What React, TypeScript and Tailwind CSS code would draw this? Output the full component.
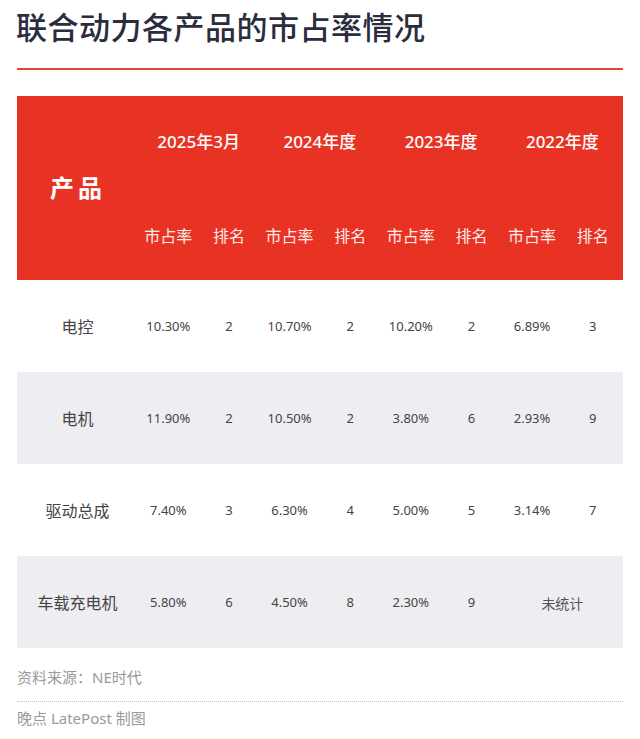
const years = ['2025年3月', '2024年度', '2023年度', '2022年度'];

const rows = [
  { name: '电控', cells: ['10.30%', '2', '10.70%', '2', '10.20%', '2', '6.89%', '3'] },
  { name: '电机', cells: ['11.90%', '2', '10.50%', '2', '3.80%', '6', '2.93%', '9'] },
  { name: '驱动总成', cells: ['7.40%', '3', '6.30%', '4', '5.00%', '5', '3.14%', '7'] },
  { name: '车载充电机', cells: ['5.80%', '6', '4.50%', '8', '2.30%', '9'] },
];

const font = { fontFamily: '"Noto Sans", "Noto Sans CJK SC", sans-serif' };

export default function App() {
  return (
    <div className="w-[640px] h-[739px] bg-white overflow-hidden" style={font}>
      <h1 className="pl-4 pt-[7px] text-[31px] leading-[40px] font-medium text-[#2a2d3e] tracking-[0.5px]">
        联合动力各产品的市占率情况
      </h1>

      <div className="mx-[17px] mt-[21px] h-[2px] bg-[#e4433a]" />

      <div className="mx-[17px] mt-[26px]">
        {/* Header */}
        <div className="grid grid-cols-[121px_repeat(8,1fr)] grid-rows-[88px_96px] h-[184px] bg-[#e83324] text-white">
          <div className="row-span-2 flex items-center justify-center text-[24px] font-bold tracking-[4px] pl-[1px]">
            产品
          </div>
          {years.map((y) => (
            <div key={y} className="col-span-2 flex items-center justify-center pt-[4px] text-[17px] font-medium">
              {y}
            </div>
          ))}
          {years.map((y) => (
            <div key={y + 's'} className="col-span-2 grid grid-cols-2 content-start pt-[40px] text-[16px] leading-[24px] text-white/90">
              <div className="text-center">市占率</div>
              <div className="text-center">排名</div>
            </div>
          ))}
        </div>

        {/* Body */}
        {rows.map((r, i) => (
          <div
            key={r.name}
            className={`grid grid-cols-[121px_repeat(8,1fr)] h-[92px] items-center pt-[2px] ${i % 2 === 1 ? 'bg-[#eeeef2]' : 'bg-white'}`}
          >
            <div className="text-center text-[16px] text-[#444]">{r.name}</div>
            {r.cells.map((c, j) => (
              <div key={j} className="text-center text-[13px] text-[#444]">
                {c}
              </div>
            ))}
            {r.cells.length < 8 && (
              <div className="col-span-2 text-center text-[14px] text-[#555]">未统计</div>
            )}
          </div>
        ))}
      </div>

      <div className="mx-[17px] mt-[19px] text-[15px] leading-[20px] text-[#9a9a9a]">资料来源：NE时代</div>
      <div className="mx-[17px] mt-[14px] border-t border-dotted border-[#bbbbbb]" />
      <div className="mx-[17px] mt-[6px] text-[15px] leading-[20px] text-[#9a9a9a]">晚点 LatePost 制图</div>
    </div>
  );
}
